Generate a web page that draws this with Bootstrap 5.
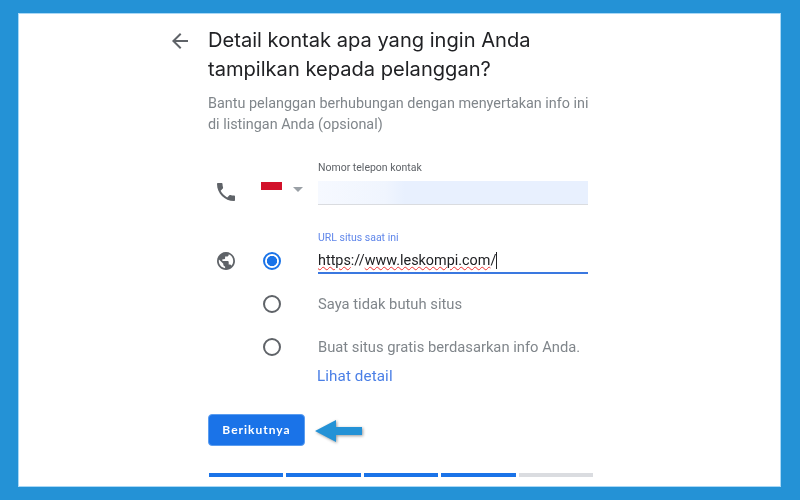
<!DOCTYPE html>
<html lang="id"><head><meta charset="utf-8">
<link href="https://cdn.jsdelivr.net/npm/bootstrap@5.3.0/dist/css/bootstrap.min.css" rel="stylesheet">
<style>
html,body{height:500px;overflow:hidden}
body{background:#2492d6;padding:13px 19px 13px 18px;font-family:Roboto,"Liberation Sans",sans-serif}
.sheet{background:#fff;height:474px;outline:1px solid #a9d8f6;outline-offset:-1px;padding-left:154px}
.back-col{width:36px;padding-top:20px}
.back-col svg{width:16px;height:16px;fill:#5f6368;display:block}
.main-col{width:385px;padding-top:13px;filter:blur(.3px)}
.headline{font-family:Inter,"Open Sans",sans-serif;font-size:20.1px;line-height:29px;color:#202124;margin:0 0 9px;font-weight:400;white-space:nowrap}
.subline{font-size:14.4px;line-height:21px;color:#80868b;margin:0 0 26px;white-space:nowrap}
.form-grid{display:grid;grid-template-columns:53px 57px 270px;align-items:center}
.ico{width:18px;height:18px;fill:#5f6368;margin-left:9px;display:block}
.ico.phone{margin-top:-2px}
.mini-label{font-size:10.5px;line-height:14px;color:#5f6368;margin-bottom:6px}
.mini-label.on{color:#5f86ea;margin-top:26px;margin-bottom:3px}
.ph-cell{grid-column:3}
.ph-box{height:24px;background:linear-gradient(90deg,#f6f9ff 0,#f0f5fe 25%,#e8f0fe 32%);border-bottom:1px solid #dadce0}
.flag-cell{display:flex;align-items:flex-start;margin-top:-13px}
.flag-bar{width:21px;height:8px;background:#d2112a}
.flag-caret{width:0;height:0;border-left:5px solid transparent;border-right:5px solid transparent;border-top:5px solid #9aa0a6;margin:5px 0 0 11px}
.url-box{height:26px;border-bottom:2px solid #3a78e0;font-size:14.4px;line-height:25px;color:#202124}
.spell{text-decoration:underline wavy #e33;text-decoration-thickness:1px;text-underline-offset:1px}
.text-caret{border-right:1px solid #202124}
.form-check-input.dot{width:18px;height:18px;margin:0 0 0 2px;background:#fff;border:2px solid #5f6368;box-shadow:none;float:none;display:block}
.form-check-input.dot:checked{border-color:#1a73e8;background-color:#fff;background-image:radial-gradient(circle,#1a73e8 0 4.8px,transparent 5.4px)}
.opt-text{font-size:14.75px;line-height:20px;color:#80868b}
.more-link{font-size:15.2px;line-height:20px;color:#4a7fe6;text-decoration:none;margin-left:-1px;letter-spacing:.1px}
.next-btn{width:97px;height:32px;--bs-btn-padding-x:0;--bs-btn-padding-y:0;background:#1a73e8;border:1px solid #5b9df0;color:#fff;font-family:Lato,sans-serif;font-size:12px;font-weight:700;letter-spacing:1px;border-radius:4px}
.next-btn:hover{background:#1a73e8;color:#fff}
.hint-arrow{width:48px;height:24px;margin-left:10px;fill:#2492d6;overflow:visible;filter:drop-shadow(1px 1px 1.5px rgba(0,0,0,.4))}
.steps{display:flex;gap:3px;margin:27px 0 0 1px;width:384px}
.step{flex:1;height:4px;background:#1a73e8}
.step.idle{background:#dadce0}
.grid-two{grid-column:2}
.gap-a{margin-top:20px}
.gap-b{margin-top:23px}
.form-check-input.dot.gap-a{margin-top:20px}
.form-check-input.dot.gap-b{margin-top:23px}
.link-row{margin-top:7px}
.btn-row{margin-top:26px}
</style></head>
<body>
<div class="sheet d-flex">
  <div class="back-col"><svg viewBox="4 4 16 16"><path d="M20 11H7.83l5.59-5.59L12 4l-8 8 8 8 1.41-1.41L7.83 13H20v-2z"/></svg></div>
  <div class="main-col">
    <h1 class="headline">Detail kontak apa yang ingin Anda<br>tampilkan kepada pelanggan?</h1>
    <p class="subline">Bantu pelanggan berhubungan dengan menyertakan info ini<br>di listingan Anda (opsional)</p>
    <div class="form-grid">
      <div class="ph-cell"><div class="mini-label">Nomor telepon kontak</div></div>
      <svg class="ico phone" viewBox="3 3 18 18"><path d="M6.62 10.79c1.44 2.83 3.76 5.14 6.59 6.59l2.2-2.2c.27-.27.67-.36 1.02-.24 1.12.37 2.33.57 3.57.57.55 0 1 .45 1 1V20c0 .55-.45 1-1 1-9.39 0-17-7.61-17-17 0-.55.45-1 1-1h3.5c.55 0 1 .45 1 1 0 1.25.2 2.45.57 3.57.11.35.03.74-.25 1.02l-2.2 2.2z"/></svg>
      <div class="flag-cell"><span class="flag-bar"></span><span class="flag-caret"></span></div>
      <div class="ph-box"></div>

      <div class="ph-cell"><div class="mini-label on">URL situs saat ini</div></div>
      <svg class="ico" viewBox="2 2 20 20"><path d="M12 2C6.48 2 2 6.48 2 12s4.48 10 10 10 10-4.48 10-10S17.52 2 12 2zm-1 17.93c-3.95-.49-7-3.85-7-7.93 0-.62.08-1.21.21-1.79L9 15v1c0 1.1.9 2 2 2v1.93zm6.9-2.54c-.26-.81-1-1.39-1.9-1.39h-1v-3c0-.55-.45-1-1-1H8v-2h2c.55 0 1-.45 1-1V7h2c1.1 0 2-.9 2-2v-.41c2.93 1.19 5 4.06 5 7.41 0 2.08-.8 3.97-2.1 5.39z"/></svg>
      <input class="form-check-input dot" type="radio" name="web" checked aria-label="URL situs saat ini">
      <div class="url-box"><span class="text-caret"><span class="spell">https</span>://<span class="spell">www.leskompi.com</span>/</span></div>

      <input class="form-check-input dot grid-two gap-a" type="radio" name="web" aria-label="Saya tidak butuh situs">
      <div class="opt-text gap-a">Saya tidak butuh situs</div>

      <input class="form-check-input dot grid-two gap-b" type="radio" name="web" aria-label="Buat situs gratis">
      <div class="opt-text gap-b">Buat situs gratis berdasarkan info Anda.</div>

      <div class="ph-cell link-row"><a href="#" class="more-link">Lihat detail</a></div>
    </div>
    <div class="d-flex align-items-center btn-row">
      <button type="button" class="btn next-btn">Berikutnya</button>
      <svg class="hint-arrow" viewBox="0 0 48 24"><polygon points="0,13 21,2 21,9 47,9 47,17 21,17 21,24"/></svg>
    </div>
    <div class="steps"><span class="step"></span><span class="step"></span><span class="step"></span><span class="step"></span><span class="step idle"></span></div>
  </div>
</div>
</body></html>
